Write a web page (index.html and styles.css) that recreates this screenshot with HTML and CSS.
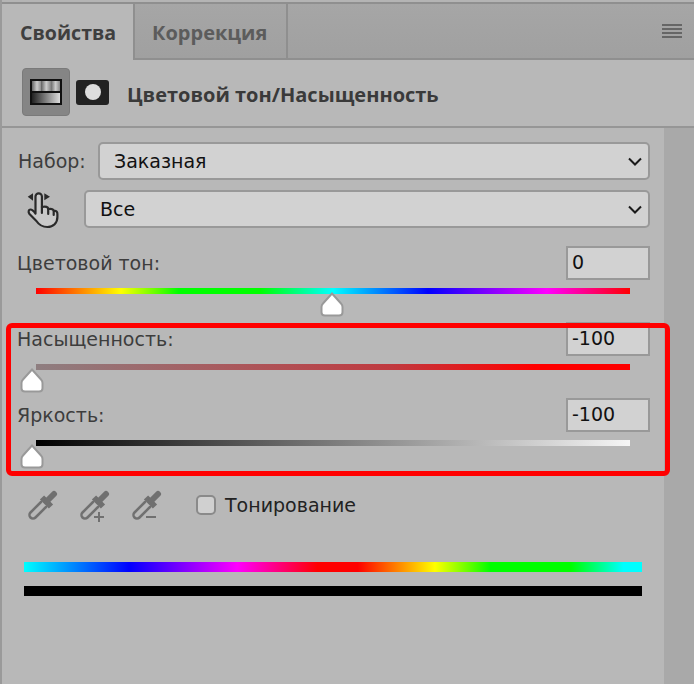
FILE: index.html
```html
<!DOCTYPE html>
<html lang="ru">
<head>
<meta charset="utf-8">
<title>Свойства</title>
<link rel="stylesheet" href="styles.css">
</head>
<body>
<div class="panel">
  <div class="tabs">
    <div class="tab tab-active">Свойства</div>
    <div class="tab">Коррекция</div>
    <div class="menu"><span></span><span></span><span></span><span></span></div>
  </div>
  <div class="head">
    <div class="adj-btn"><div class="adj-icon"><div class="adj-top"></div><div class="adj-bottom"></div></div></div>
    <div class="mask-icon"><div class="mask-dot"></div></div>
    <div class="head-title">Цветовой тон/Насыщенность</div>
  </div>
  <div class="body">
    <div class="main">
      <div class="row row-first">
        <span class="label">Набор:</span>
        <div class="select select-preset"><span>Заказная</span>
          <svg class="chev" viewBox="0 0 14 9"><path d="M1 1.5l6 6 6-6"/></svg></div>
      </div>
      <div class="row row-second">
        <svg class="hand" viewBox="0 0 32 37">
          <path class="hand-arrow" d="M.7 4.7L6 1.3v7.4zM23 4.7L17.3 1.3v7z"/>
          <path class="hand-line" d="M8.5 21V4.5a3.2 3.2 0 0 1 6.4 0V15c4-1 6 0 6.5 2 3-.5 5 .5 5.5 2 2.5-.5 3.5 1 3.5 3v3c0 6-4 10-10 10-6 0-9-3-11-6L2.5 22c-1.5-2-1-4.5 1-4.5 1.5 0 3.5 2 5 4z"/>
          <path class="hand-line" d="M14.9 15v6M21.2 17v5M26.7 19v4"/>
        </svg>
        <div class="select select-channel"><span>Все</span>
          <svg class="chev" viewBox="0 0 14 9"><path d="M1 1.5l6 6 6-6"/></svg></div>
      </div>

      <div class="slider slider-first">
        <div class="slider-head"><span class="label">Цветовой тон:</span><div class="num">0</div></div>
        <div class="track track-hue">
          <svg class="thumb thumb-mid" viewBox="0 0 24 25"><path d="M12 1.5l9 10c1 1 1.500 2 1.500 3.500v5c0 2-1.500 3.500-3.500 3.500H5c-2 0-3.500-1.500-3.500-3.500v-5c0-1.500.5-2.500 1.500-3.500z"/></svg>
        </div>
      </div>
      <div class="slider">
        <div class="slider-head"><span class="label">Насыщенность:</span><div class="num">-100</div></div>
        <div class="track track-sat">
          <svg class="thumb thumb-min" viewBox="0 0 24 25"><path d="M12 1.5l9 10c1 1 1.500 2 1.500 3.500v5c0 2-1.500 3.500-3.500 3.500H5c-2 0-3.500-1.500-3.500-3.500v-5c0-1.500.5-2.500 1.500-3.500z"/></svg>
        </div>
      </div>
      <div class="slider">
        <div class="slider-head"><span class="label">Яркость:</span><div class="num">-100</div></div>
        <div class="track track-light">
          <svg class="thumb thumb-min" viewBox="0 0 24 25"><path d="M12 1.5l9 10c1 1 1.500 2 1.500 3.500v5c0 2-1.500 3.500-3.500 3.500H5c-2 0-3.500-1.500-3.500-3.500v-5c0-1.500.5-2.500 1.500-3.500z"/></svg>
        </div>
      </div>

      <div class="tools">
        <svg class="dropper" viewBox="0 0 32 32">
          <path class="dr-tube" d="M14 12L3.500 22.500a3.500 3.500 0 0 0 5 5L19 17"/>
          <path class="dr-collar" d="M15 7.500l9 9"/>
          <path class="dr-bulb" d="M20 11l7-7"/>
        </svg>
        <svg class="dropper" viewBox="0 0 32 32">
          <path class="dr-tube" d="M14 12L3.500 22.500a3.500 3.500 0 0 0 5 5L19 17"/>
          <path class="dr-collar" d="M15 7.500l9 9"/>
          <path class="dr-bulb" d="M20 11l7-7"/>
          <path class="dr-sign" d="M15 27h10M20 22v10"/>
        </svg>
        <svg class="dropper" viewBox="0 0 32 32">
          <path class="dr-tube" d="M14 12L3.500 22.500a3.500 3.500 0 0 0 5 5L19 17"/>
          <path class="dr-collar" d="M15 7.500l9 9"/>
          <path class="dr-bulb" d="M20 11l7-7"/>
          <path class="dr-sign" d="M15 27h10"/>
        </svg>
        <div class="check"></div>
        <span class="check-label">Тонирование</span>
      </div>

      <div class="bar bar-hue"></div>
      <div class="bar bar-black"></div>

      <div class="highlight"></div>
    </div>
    <div class="rail"></div>
  </div>
</div>
</body>
</html>
```

FILE: styles.css
```css
* { box-sizing: border-box; }
html, body { margin: 0; padding: 0; }
body { width: 694px; height: 684px; overflow: hidden; background: #b8b8b8; }

.panel {
  width: 694px;
  height: 684px;
  padding-top: 2px;
  background: #b4b4b4;
  display: flex;
  flex-direction: column;
  font-family: "DejaVu Sans", "Liberation Sans", sans-serif;
  border-left: 2px solid #9a9a9a;
}

.tabs {
  display: flex;
  height: 58px;
  flex: none;
  border-top: 2px solid #8f8f8f;
  border-bottom: 2px solid #8f8f8f;
  background: linear-gradient(#a6a6a6, #a0a0a0);
  position: relative;
}
.tab {
  width: 153px;
  height: 54px;
  padding-left: 17px;
  border-right: 2px solid #8f8f8f;
  font-family: "Open Sans", sans-serif;
  font-weight: 700;
  font-size: 20px;
  line-height: 58px;
  color: #5c5c5c;
}
.tab-active {
  width: 133px;
  height: 56px;
  padding-left: 18px;
  margin-bottom: -2px;
  background: #b8b8b8;
  color: #3f3f3f;
  font-size: 19.600px;
}
.menu {
  position: absolute;
  left: 660px;
  top: 20px;
  width: 20px;
  display: flex;
  flex-direction: column;
  gap: 2px;
}
.menu span { display: block; height: 2px; background: #666; }

.head {
  height: 68px;
  flex: none;
  display: flex;
  align-items: center;
  padding-left: 20px;
  padding-bottom: 2px;
  border-bottom: 2px solid #969696;
  background: #b8b8b8;
}
.adj-btn {
  width: 48px;
  height: 48px;
  background: #858585;
  border: 1px solid #7a7a7a;
  border-radius: 4px;
  display: flex;
  align-items: center;
  justify-content: center;
}
.adj-icon {
  width: 32px;
  height: 26px;
  border: 2px solid #111;
  background: #111;
  display: flex;
  flex-direction: column;
  gap: 2px;
}
.adj-top {
  flex: 1;
  background: repeating-linear-gradient(90deg, #666 0, #ccc 5px, #888 9.300px);
}
.adj-bottom { flex: 1; background: linear-gradient(90deg, #222, #ddd); }
.mask-icon {
  width: 33px;
  height: 25px;
  margin-left: 6px;
  background: #222;
  border-radius: 3px;
  display: flex;
  align-items: center;
  justify-content: center;
}
.mask-dot { width: 16px; height: 16px; border-radius: 50%; background: #ddd; }
.head-title {
  margin-left: 18px;
  margin-top: 4px;
  font-family: "Open Sans", sans-serif;
  font-size: 20px;
  font-weight: 700;
  color: #3a3a3a;
}

.body { flex: 1; display: flex; min-height: 0; }
.main { width: 662px; flex: none; background: #b8b8b8; position: relative; padding-top: 14px; }
.rail { flex: 1; background: #a9a9a9; }

.label { font-size: 19px; color: #3d3d3d; }

.row { display: flex; align-items: center; height: 38px; padding-right: 14px; }
.row-first { padding-left: 16px; justify-content: space-between; }
.row-second { margin-top: 10px; padding-left: 25px; justify-content: space-between; }
.select {
  height: 38px;
  background: #d2d2d2;
  border: 2px solid #999;
  border-radius: 5px;
  display: flex;
  align-items: center;
  justify-content: space-between;
  padding-left: 14px;
  padding-right: 6px;
  font-size: 19px;
  color: #111;
}
.select-preset { width: 552px; }
.select-channel { width: 566px; }
.chev { width: 14px; height: 9px; fill: none; stroke: #1a1a1a; stroke-width: 2; }

.hand { width: 32px; height: 37px; margin-top: 2px; }
.hand-arrow { fill: #2a2a2a; }
.hand-line { fill: #c9c9c9; stroke: #2a2a2a; stroke-width: 2.200; stroke-linejoin: round; stroke-linecap: round; }

.slider { margin-top: 28px; }
.slider-first { margin-top: 18px; }
.slider-head {
  display: flex;
  align-items: center;
  justify-content: space-between;
  height: 34px;
  padding-left: 15px;
  padding-right: 14px;
}
.num {
  width: 84px;
  height: 34px;
  background: #d2d2d2;
  border: 2px solid #999;
  padding-left: 4px;
  font-size: 19px;
  line-height: 29px;
  color: #111;
}
.track {
  width: 594px;
  height: 6px;
  margin-top: 8px;
  margin-left: 34px;
  position: relative;
}
.track-hue {
  background: linear-gradient(90deg, #f00 0, #ff0 14.300%, #0f0 24%, #0f0 37.700%, #0ff 50%, #00f 66%, #f0f 86%, #f00 100%);
}
.track-sat { background: linear-gradient(90deg, #8e7e80 0, #c0393f 60%, #f00 84%, #f00 100%); }
.track-light { background: linear-gradient(90deg, #000, #f6f6f6); }
.thumb {
  position: absolute;
  top: 4px;
  width: 24px;
  height: 25px;
  fill: #fff;
  stroke: #999;
  stroke-width: 2;
}
.thumb-mid { left: 284px; }
.thumb-min { left: -16px; }

.tools {
  display: flex;
  align-items: center;
  height: 32px;
  margin-top: 44px;
  padding-left: 25px;
  gap: 20px;
}
.dropper { width: 32px; height: 32px; fill: none; flex: none; }
.dr-tube { stroke: #707070; stroke-width: 2.500; stroke-linecap: round; }
.dr-collar { stroke: #707070; stroke-width: 6; }
.dr-bulb { stroke: #707070; stroke-width: 6; stroke-linecap: round; }
.dr-sign { stroke: #707070; stroke-width: 2; }
.check {
  width: 20px;
  height: 20px;
  margin-left: 13px;
  margin-top: -2px;
  background: #d0d0d0;
  border: 2px solid #8a8a8a;
  border-radius: 5px;
}
.check-label { margin-left: -11px; margin-top: -2px; font-size: 19px; color: #222; }

.bar { width: 618px; height: 10px; margin-left: 22px; }
.bar-hue {
  margin-top: 40px;
  background: linear-gradient(90deg, #0ff 0, #00f 17%, #f0f 34.500%, #f00 47.500%, #f00 54%, #ff0 66.500%, #0f0 75.500%, #0f0 88.500%, #0ff 97%, #0ff 100%);
}
.bar-black { margin-top: 14px; background: #000; }

.highlight {
  position: absolute;
  left: 4px;
  top: 195px;
  width: 664px;
  height: 153px;
  border: 5px solid #f00;
  border-radius: 6px;
}
```
